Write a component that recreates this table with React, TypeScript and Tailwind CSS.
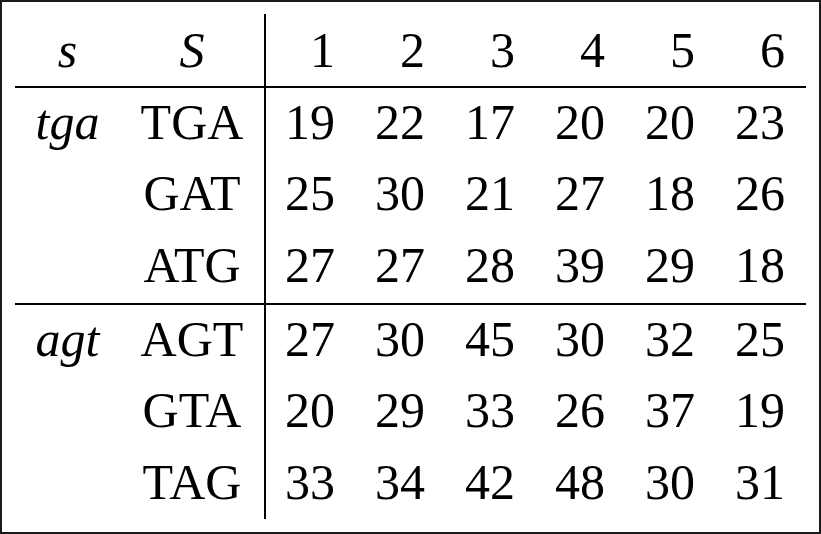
import React from 'react';

const groups = [
  {
    label: 'tga',
    rows: [
      { code: 'TGA', values: [19, 22, 17, 20, 20, 23] },
      { code: 'GAT', values: [25, 30, 21, 27, 18, 26] },
      { code: 'ATG', values: [27, 27, 28, 39, 29, 18] },
    ],
  },
  {
    label: 'agt',
    rows: [
      { code: 'AGT', values: [27, 30, 45, 30, 32, 25] },
      { code: 'GTA', values: [20, 29, 33, 26, 37, 19] },
      { code: 'TAG', values: [33, 34, 42, 48, 30, 31] },
    ],
  },
];

const Row = ({ first, second, values, italicFirst, italicSecond, body }: {
  first: string;
  second: string;
  values: (string | number)[];
  italicFirst?: boolean;
  italicSecond?: boolean;
  body?: boolean;
}) => {
  const shift = body ? 'pb-[4px]' : 'pb-[1px]';
  return (
    <>
      <div className={`flex items-center justify-center ${shift} ${italicFirst ? 'italic' : ''}`}>{first}</div>
      <div className={`flex items-center justify-center ${shift} ${italicSecond ? 'italic' : ''}`}>{second}</div>
      <div className="bg-black" />
      {values.map((v, i) => (
        <div key={i} className={`flex items-center justify-end pr-[21px] ${shift}`}>
          {v}
        </div>
      ))}
    </>
  );
};

const App = () => {
  return (
    <div className="w-[821px] h-[534px] box-border border-2 border-[#1a1a1a] bg-white pt-[12px] pl-[13px] text-black font-['Liberation_Serif',serif] text-[50px] leading-none">
      <div className="w-[791px] grid grid-cols-[105px_144px_2px_repeat(6,90px)] grid-rows-[72px_2px_71px_72px_72px_2px_71px_72px_71px]">
        <Row first="s" second="S" values={[1, 2, 3, 4, 5, 6]} italicFirst italicSecond />
        <div className="col-span-full bg-black" />
        {groups[0].rows.map((r, i) => (
          <Row key={r.code} first={i === 0 ? groups[0].label : ''} second={r.code} values={r.values} italicFirst body />
        ))}
        <div className="col-span-full bg-black" />
        {groups[1].rows.map((r, i) => (
          <Row key={r.code} first={i === 0 ? groups[1].label : ''} second={r.code} values={r.values} italicFirst body />
        ))}
      </div>
    </div>
  );
};

export default App;
